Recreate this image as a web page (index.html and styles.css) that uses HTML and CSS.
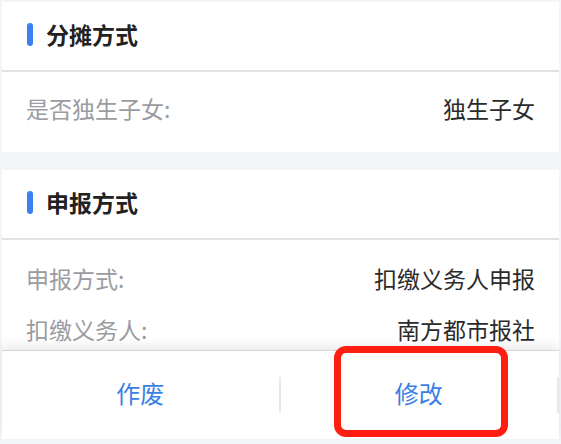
FILE: index.html
```html
<!DOCTYPE html>
<html lang="zh-CN">
<head>
    <meta charset="UTF-8">
    <meta name="viewport" content="width=device-width, initial-scale=1.0">
    <title>申报详情</title>
    <link rel="stylesheet" href="styles.css">
</head>
<body>
    <div class="page">
        <div class="content">
            <div class="card">
                <div class="card-title"><span class="mark"></span><span>分摊方式</span></div>
                <div class="card-body first">
                    <div class="row"><span class="label">是否独生子女:</span><span class="value">独生子女</span></div>
                </div>
            </div>
            <div class="card">
                <div class="card-title"><span class="mark"></span><span>申报方式</span></div>
                <div class="card-body">
                    <div class="row"><span class="label">申报方式:</span><span class="value">扣缴义务人申报</span></div>
                    <div class="row"><span class="label">扣缴义务人:</span><span class="value">南方都市报社</span></div>
                </div>
            </div>
        </div>
        <div class="footer">
            <button class="action">作废</button>
            <button class="action">修改</button>
            <div class="highlight"></div>
        </div>
    </div>
</body>
</html>
```

FILE: styles.css
```css
html, body {
    margin: 0;
    padding: 0;
}
body {
    background-color: #f4f5f8;
    font-family: "Noto Sans CJK SC", "Noto Sans", sans-serif;
    line-height: 1;
}
.page {
    height: 444px;
    display: flex;
    flex-direction: column;
    overflow: hidden;
}
.content {
    flex: 1;
    overflow: hidden;
    padding: 2px 2px 0;
}
.card {
    background-color: #ffffff;
    margin-bottom: 18px;
}
.card-title {
    height: 64px;
    padding-bottom: 4px;
    display: flex;
    align-items: center;
    padding-left: 25px;
    font-size: 23px;
    font-weight: bold;
    color: #222222;
    border-bottom: 2px solid #e1e1e6;
}
.mark {
    width: 6px;
    height: 23px;
    border-radius: 3px;
    background-color: #3b82f0;
    margin-right: 13px;
}
.card-body {
    padding: 13px 24px 0;
}
.card-body.first {
    height: 72px;
    padding-top: 0;
    padding-bottom: 8px;
    display: flex;
    flex-direction: column;
    justify-content: center;
}
.row {
    display: flex;
    justify-content: space-between;
    align-items: center;
    height: 51px;
    font-size: 23px;
}
.card-body.first .row {
    height: auto;
}
.label {
    color: #9a9ca2;
}
.value {
    color: #2b2b2b;
}
.footer {
    position: relative;
    height: 88px;
    margin: 0 2px 5px;
    display: flex;
    align-items: center;
    background-color: #ffffff;
    border-top: 1px solid #d6d6d9;
    box-shadow: 0 -5px 10px rgba(0, 0, 0, 0.08);
}
.action {
    flex: 1;
    height: 36px;
    border: none;
    border-right: 2px solid #e8e8ea;
    background: none;
    font-family: inherit;
    font-size: 24px;
    line-height: 1;
    color: #3a7fe4;
    padding: 0 0 4px;
}
.highlight {
    position: absolute;
    left: 332px;
    top: -5px;
    width: 160px;
    height: 77px;
    border: 7px solid #ff1e10;
    border-radius: 12px;
}
```
